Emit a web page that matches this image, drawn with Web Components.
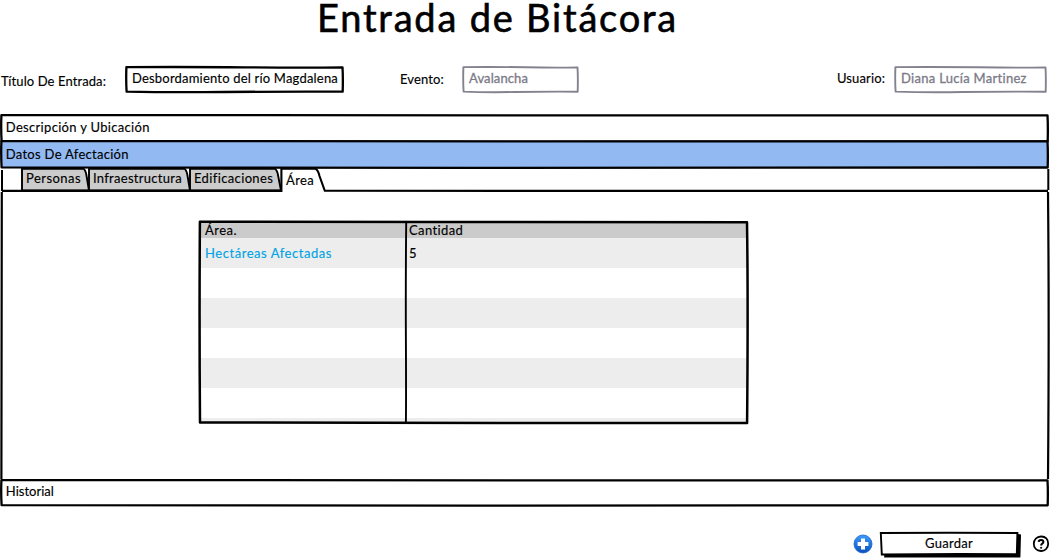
<!DOCTYPE html>
<html lang="es">
<head>
<meta charset="utf-8">
<title>Entrada de Bitácora</title>
<style>
html,body{margin:0;background:#fff}
body{width:1050px;height:558px;font-family:Lato,sans-serif;font-size:13px;color:#000}
</style>
</head>
<body>
<log-entry-page></log-entry-page>
<script>
// Text line whose tracking is adjusted so that it fills a given width.
class SkText extends HTMLElement{
  connectedCallback(){
    const r=this.attachShadow({mode:'open'});
    r.innerHTML=`<style>:host{display:block;line-height:16px;height:16px;white-space:pre;flex:none;-webkit-text-stroke:.15px currentColor}span{display:inline-block}</style><span><slot></slot></span>`;
    const s=r.querySelector('span'),w=+this.getAttribute('w');
    if(w){
      const n=this.textContent.length;
      s.style.letterSpacing=((w-s.getBoundingClientRect().width)/n)+'px';
      this.style.width=w+'px';
    }
  }
}
customElements.define('sk-text',SkText);

// Hand-drawn rectangle behind the slotted content.
class SkFrame extends HTMLElement{
  connectedCallback(){
    const r=this.attachShadow({mode:'open'});
    const W=+this.getAttribute('w'),h=+this.getAttribute('h'),c=this.getAttribute('stroke')||'#000',f=this.getAttribute('fill')||'none';
    const k=this.getAttribute('weight')||2.3;
    r.innerHTML=`<style>:host{display:flex;position:relative;box-sizing:border-box;width:${W}px;height:${h}px;flex:none}
    svg{position:absolute;inset:0;overflow:visible;pointer-events:none}
    ::slotted(*){position:relative;z-index:1}</style>
    <svg width="${W}" height="${h}"><path fill="${f}" stroke="${c}" stroke-width="${k}" stroke-linejoin="round"
    d="M1.4 1.1 Q${W*.3} .8 ${W*.55} 1.3 T${W-1.5} 1.4 Q${W-.9} ${h*.4} ${W-1.3} ${h-1.3} Q${W*.7} ${h-1.5} ${W*.45} ${h-1} T1.6 ${h-1.4} Q.9 ${h*.5} 1.4 1.1Z"/></svg><slot></slot>`;
  }
}
customElements.define('sk-frame',SkFrame);

class EntryForm extends HTMLElement{
  connectedCallback(){
    this.attachShadow({mode:'open'}).innerHTML=`<style>
    :host{display:flex;align-items:flex-start;height:48px}
    sk-frame{padding:4px 0 0 7px}
    .off{color:#7b7a87}
    .off sk-text{-webkit-text-stroke-width:.3px}
    .a{margin:7px 19px 0 1px}.b{margin:5px 18px 0 56px}.c{margin:4px 9px 0 258px}
    </style>
    <sk-text class="a" w="105">Título De Entrada:</sk-text>
    <sk-frame w="219" h="27"><sk-text w="206">Desbordamiento del río Magdalena</sk-text></sk-frame>
    <sk-text class="b" w="44">Evento:</sk-text>
    <sk-frame class="off" w="117" h="27" stroke="#84828e" weight="1.9"><sk-text w="59">Avalancha</sk-text></sk-frame>
    <sk-text class="c" w="48">Usuario:</sk-text>
    <sk-frame class="off" w="153" h="27" stroke="#84828e" weight="1.9"><sk-text w="126">Diana Lucía Martinez</sk-text></sk-frame>`;
  }
}
customElements.define('entry-form',EntryForm);

class AccordionBar extends HTMLElement{
  connectedCallback(){
    const on=this.hasAttribute('open');
    this.attachShadow({mode:'open'}).innerHTML=`<style>
    :host{display:block;height:26.4px}
    .in{padding:var(--pad,5px) 0 0 5.5px}</style>
    <sk-frame w="1049" h="${this.getAttribute('h')||28.8}" fill="${on?'#93b9f2':'#fff'}"><div class="in"><slot></slot></div></sk-frame>`;
  }
}
customElements.define('accordion-bar',AccordionBar);

class TabStrip extends HTMLElement{
  connectedCallback(){
    this.attachShadow({mode:'open'}).innerHTML=`<style>
    :host{display:flex;position:relative;height:23px;align-items:flex-start;padding-left:22px}
    svg{position:absolute;left:0;top:0;overflow:visible}
    .t{position:relative;box-sizing:border-box;padding:2px 0 0 4px;height:22px}
    </style>
    <svg width="1050" height="23">
      <g fill="#ccc" stroke="#000" stroke-width="1.9" stroke-linejoin="round">
        <path d="M22 .8H83.5Q85.5 2 86.4 7L89 22.5H22Z"/><path d="M89 .8H184.5Q186.5 2 187.4 7L190 22.5H89Z"/><path d="M190 .8H275Q277 2 278 7L281 22.5H190Z"/>
      </g>
      <path d="M2 2V23M1048.3 1V22" stroke="#000" stroke-width="2" fill="none"/>
      <path d="M282 2H315.5L324.5 23H282Z" fill="#fff"/>
      <path d="M2 22.9H281.4V.8H315.5Q318 2 319.5 8L324.8 22.8Q700 23.4 1048 22.9" fill="none" stroke="#000" stroke-width="2.1"/>
    </svg>
    <div class="t" style="width:67px"><sk-text w="55">Personas</sk-text></div>
    <div class="t" style="width:101px"><sk-text w="89">Infraestructura</sk-text></div>
    <div class="t" style="width:91px"><sk-text w="79">Edificaciones</sk-text></div>
    <div class="t" style="width:44px;padding:4px 0 0 5px"><sk-text w="28">Área</sk-text></div>`;
  }
}
customElements.define('tab-strip',TabStrip);

class AreaTable extends HTMLElement{
  connectedCallback(){
    const row=(h,c,a='',b='')=>`<div class="r" style="height:${h}px;background:${c}"><div>${a}</div><div>${b}</div></div>`;
    this.attachShadow({mode:'open'}).innerHTML=`<style>
    :host{display:block;position:relative;width:549px;height:203px}
    .body{padding:1px 1px 0 1px}
    .r{display:grid;grid-template-columns:207px 340px;align-items:center}
    .r div:first-child{padding-left:5px}.r div:last-child{padding-left:2px}
    .link{color:#00a4e4}
    svg{position:absolute;left:0;top:0;overflow:visible}
    </style>
    <div class="body">
    ${row(16,'#cbcbcb','<sk-text w="32">Área.</sk-text>','<sk-text w="54.5">Cantidad</sk-text>')}
    ${row(30,'#ededed','<sk-text class="link" w="127">Hectáreas Afectadas</sk-text>','<sk-text>5</sk-text>')}
    ${row(30,'#fff')}${row(30,'#ededed')}${row(30,'#fff')}${row(30,'#ededed')}${row(30,'#fff')}${row(4,'#ededed')}
    </div>
    <svg width="549" height="203" fill="none" stroke="#000" stroke-linejoin="round">
      <path stroke-width="2.5" d="M.9 .8 Q130 .4 250 1 T548 1.3 Q549.2 80 548.1 202 Q430 201.6 300 202 T1 201.4 Q.2 100 .9 .8Z"/>
      <path stroke-width="1.9" d="M207.2 2 Q206.6 60 206.9 120 T206.9 201"/>
    </svg>`;
  }
}
customElements.define('area-table',AreaTable);

class TabPanel extends HTMLElement{
  connectedCallback(){
    this.attachShadow({mode:'open'}).innerHTML=`<style>
    :host{display:block;position:relative;height:289px;box-sizing:border-box;padding:30px 0 0 199px}
    svg{position:absolute;left:0;top:0;overflow:visible}</style>
    <svg width="1050" height="289" fill="none" stroke="#000" stroke-width="2.2"><path d="M1.8 1 Q1 130 1.4 288 M1048 1 Q1049.3 130 1048 288"/></svg>
    <slot></slot>`;
  }
}
customElements.define('tab-panel',TabPanel);

class RoundIcon extends HTMLElement{
  connectedCallback(){
    const add=this.getAttribute('kind')==='add';
    this.attachShadow({mode:'open'}).innerHTML=`<style>:host{display:block;flex:none;height:20px}svg{display:block}</style>`+(add?
    `<svg width="20" height="20" viewBox="0 0 20 20"><defs><linearGradient id="g" x2="0" y2="1"><stop stop-color="#3c9cff"/><stop offset="1" stop-color="#0a50bd"/></linearGradient></defs><circle cx="10" cy="10" r="9" fill="url(#g)" stroke="#1761c8" stroke-width=".8"/><path d="M8 4.6h4v3.4h3.4v4H12v3.4H8V12H4.6V8H8z" fill="#fff"/></svg>`:
    `<svg width="18" height="20" viewBox="1 0 18 20" fill="none" stroke="#000"><path d="M10 2.5C14.5 2.3 17.3 5.5 17.2 9.7S14.2 17.2 10 17 2.7 14 2.8 9.8 5.7 2.7 10 2.5Z" stroke-width="1.8"/><path d="M7.7 7.9C7.8 5.5 12.4 5.4 12.4 8 12.4 9.6 10.1 9.6 10.1 11.6" stroke-width="2"/><circle cx="10.1" cy="13.8" r=".7" fill="#000" stroke-width=".7"/></svg>`);
  }
}
customElements.define('round-icon',RoundIcon);

class SaveButton extends HTMLElement{
  connectedCallback(){
    this.attachShadow({mode:'open'}).innerHTML=`<style>
    :host{display:flex;position:relative;justify-content:center;width:138px;height:24px;flex:none}
    svg{position:absolute;left:0;top:0;overflow:visible}sk-text{position:relative;margin-top:3px}</style>
    <svg width="138" height="24"><path d="M4 3 138 2 141 2.6 140.4 25.5 4.2 25.6Z"/><path d="M.8 1Q70 .4 137.4 1L136.8 22.3Q70 21.7 1.8 22.5Z" fill="#fff" stroke="#000" stroke-width="1.9"/></svg>
    <sk-text w="48"><slot></slot></sk-text>`;
    const s=this.shadowRoot.querySelector('sk-text').shadowRoot.querySelector('span');
    s.style.letterSpacing='0';
    s.style.letterSpacing=(48-s.getBoundingClientRect().width)/this.textContent.length+'px';
  }
}
customElements.define('save-button',SaveButton);

class LogEntryPage extends HTMLElement{
  connectedCallback(){
    this.attachShadow({mode:'open'}).innerHTML=`<style>
    :host{display:flex;flex-direction:column;width:1050px;height:558px;overflow:hidden}
    h1{margin:0;height:66px;font-weight:400;font-size:38px;display:flex;padding-left:317px;box-sizing:border-box;flex:none}
    h1 sk-text{height:40px;line-height:34px;-webkit-text-stroke:.6px #000}
    .acc{display:flex;flex-direction:column;height:393px;flex:none}
    accordion-bar,tab-strip,tab-panel{flex:none}
    accordion-bar{padding-left:.3px}
    accordion-bar[open]{--pad:6px}
    tab-strip{margin-top:1.2px}
    accordion-bar.last{margin-top:-1.2px;--pad:4.2px}
    footer{display:flex;align-items:flex-start;padding:24px 0 0 853px}
    footer round-icon{margin-top:3px}
    save-button{margin:1px 14px 0 7px}
    </style>
    <h1><sk-text w="361">Entrada de Bitácora</sk-text></h1>
    <entry-form></entry-form>
    <div class="acc">
      <accordion-bar><sk-text w="144">Descripción y Ubicación</sk-text></accordion-bar>
      <accordion-bar open><sk-text w="123">Datos De Afectación</sk-text></accordion-bar>
      <tab-strip></tab-strip>
      <tab-panel><area-table></area-table></tab-panel>
      <accordion-bar class="last" h="27.6"><sk-text w="48">Historial</sk-text></accordion-bar>
    </div>
    <footer><round-icon kind="add"></round-icon><save-button>Guardar</save-button><round-icon kind="help"></round-icon></footer>`;
  }
}
customElements.define('log-entry-page',LogEntryPage);
</script>
</body>
</html>
